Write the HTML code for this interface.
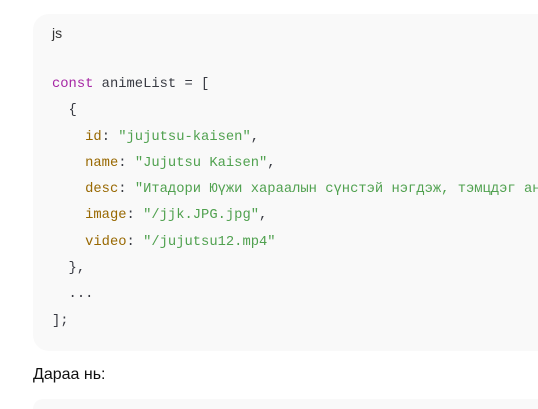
<!DOCTYPE html>
<html><head><meta charset="utf-8"><style>
html,body{margin:0;width:538px;height:409px;overflow:hidden;background:#fff;font-family:"Liberation Sans",sans-serif}
#w{position:relative;width:538px;height:409px;overflow:hidden}
.blk{position:absolute;left:33px;top:14px;width:505px;height:337px;background:#f9f9f9;border-radius:16px 0 0 16px}
.blk2{position:absolute;left:33px;top:399px;width:505px;height:10px;background:#f9f9f9;border-radius:10px 0 0 0}
.lang{position:absolute;left:52px;top:25px;font-size:14px;color:#333}
pre{position:absolute;left:52px;top:72px;width:486px;overflow:hidden;margin:0;font-family:"Liberation Mono",monospace;font-size:13.8px;line-height:26.3px;color:#383a42;white-space:pre}
.k{color:#a626a4}.p{color:#986801}.s{color:#50a14f}
.t{position:absolute;left:33px;top:366px;font-size:16px;color:#111}
</style></head><body><div id="w">
<div class="blk"></div>
<div class="lang">js</div>
<pre><span class="k">const</span> animeList = [
  {
    <span class="p">id</span>: <span class="s">"jujutsu-kaisen"</span>,
    <span class="p">name</span>: <span class="s">"Jujutsu Kaisen"</span>,
    <span class="p">desc</span>: <span class="s">"Итадори Юүжи хараалын сүнстэй нэгдэж, тэмцдэг анги"</span>,
    <span class="p">image</span>: <span class="s">"/jjk.JPG.jpg"</span>,
    <span class="p">video</span>: <span class="s">"/jujutsu12.mp4"</span>
  },
  ...
];</pre>
<div class="t">Дараа нь:</div>
<div class="blk2"></div>
</div></body></html>
